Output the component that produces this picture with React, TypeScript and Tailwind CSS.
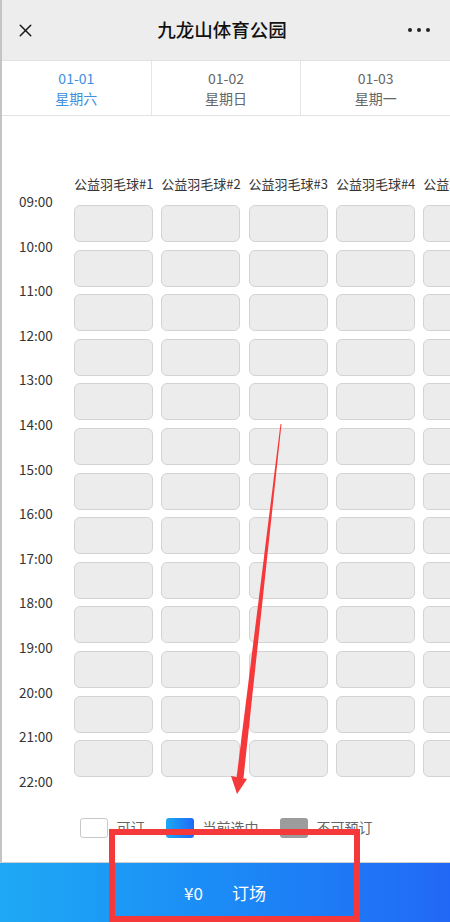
import { X } from 'lucide-react';

const dates = [
  { date: '01-01', day: '星期六', active: true },
  { date: '01-02', day: '星期日', active: false },
  { date: '01-03', day: '星期一', active: false },
];

const courts = ['公益羽毛球#1', '公益羽毛球#2', '公益羽毛球#3', '公益羽毛球#4', '公益羽毛球#5', '公益羽毛球#6'];

const hours = Array.from({ length: 14 }, (_, i) => `${String(9 + i).padStart(2, '0')}:00`);

export default function App() {
  return (
    <div className="relative w-[450px] h-[922px] flex flex-col overflow-hidden bg-white font-['Noto_Sans_CJK_SC','Noto_Sans',sans-serif]">
      <div className="flex-1 flex flex-col border-l-2 border-[#c4c4c4]">
        {/* Top bar */}
        <div className="h-[60px] shrink-0 bg-[#ededed] flex items-center">
          <div className="w-[50px] pl-[13px]">
            <X className="w-[21px] h-[21px] text-[#1a1a1a]" strokeWidth={1.7} />
          </div>
          <h1 className="flex-1 text-center pr-[8px] text-[18.5px] font-medium text-[#111]">九龙山体育公园</h1>
          <div className="w-[50px] flex gap-[5px] items-center justify-end pr-[20px]">
            <span className="w-[4px] h-[4px] shrink-0 rounded-full bg-[#222]" />
            <span className="w-[4px] h-[4px] shrink-0 rounded-full bg-[#222]" />
            <span className="w-[4px] h-[4px] shrink-0 rounded-full bg-[#222]" />
          </div>
        </div>

        {/* Date tabs */}
        <div className="h-[56px] shrink-0 flex border-t border-b border-[#e2e2e2]">
          {dates.map((d, i) => (
            <div
              key={d.date}
              className={`flex-1 flex flex-col items-center justify-center text-[14px] leading-[20px] ${
                i < dates.length - 1 ? 'border-r border-[#e6e6e6]' : ''
              } ${d.active ? 'text-[#3d8fe0]' : 'text-[#666]'}`}
            >
              <span>{d.date}</span>
              <span>{d.day}</span>
            </div>
          ))}
        </div>

        {/* Schedule */}
        <div className="flex-1 flex flex-col overflow-hidden pt-[58px]">
          <div className="flex pl-[72px] text-[13px] leading-[20px] text-[#333] whitespace-nowrap">
            {courts.map((c) => (
              <span key={c} className="w-[87.3px] shrink-0">{c}</span>
            ))}
          </div>

          <div className="flex items-start mt-[-2px]">
            <div className="w-[72px] shrink-0 flex flex-col pl-[17px]">
              {hours.map((h) => (
                <span key={h} className="h-[44.6px] text-[13.5px] leading-[18px] text-[#333]">{h}</span>
              ))}
            </div>
            <div className="mt-[13px] grid grid-cols-[repeat(6,79px)] gap-x-[8.3px] gap-y-[7.6px]">
              {Array.from({ length: 13 * 6 }, (_, i) => (
                <div key={i} className="h-[37px] rounded-[6px] bg-[#ececec] border border-[#d3d3d3]" />
              ))}
            </div>
          </div>

          {/* Legend */}
          <div className="flex items-center justify-center text-[14px] text-[#666] mt-[1px]">
            <span className="w-[28px] h-[20px] rounded-[3px] border border-[#c8c8c8] bg-white" />
            <span className="ml-[9px] mr-[21px]">可订</span>
            <span className="w-[28px] h-[20px] rounded-[3px] bg-linear-to-r from-[#1fa8f4] to-[#2268f6]" />
            <span className="ml-[9px] mr-[21px]">当前选中</span>
            <span className="w-[28px] h-[20px] rounded-[3px] bg-[#9c9c9c]" />
            <span className="ml-[9px]">不可预订</span>
          </div>
        </div>
      </div>

      {/* Book bar */}
      <div className="h-[60px] shrink-0 border-t border-[#cfcfcf] bg-linear-to-r from-[#1fa9f5] to-[#2268f6] flex items-center justify-center gap-[29px] text-white text-[17px]">
        <span>¥0</span>
        <span>订场</span>
      </div>

      {/* Annotations */}
      <svg className="absolute inset-0 pointer-events-none" width="450" height="922" viewBox="0 0 450 922">
        <polygon points="280.5,424 281.5,424 243.5,778 236.5,778" fill="#f5393a" />
        <polygon points="231,776 247,779 237,794" fill="#f5393a" />
      </svg>
      <div className="absolute left-[109px] top-[829px] w-[251px] h-[93px] border-[6px] border-[#f5393a] pointer-events-none" />
    </div>
  );
}
